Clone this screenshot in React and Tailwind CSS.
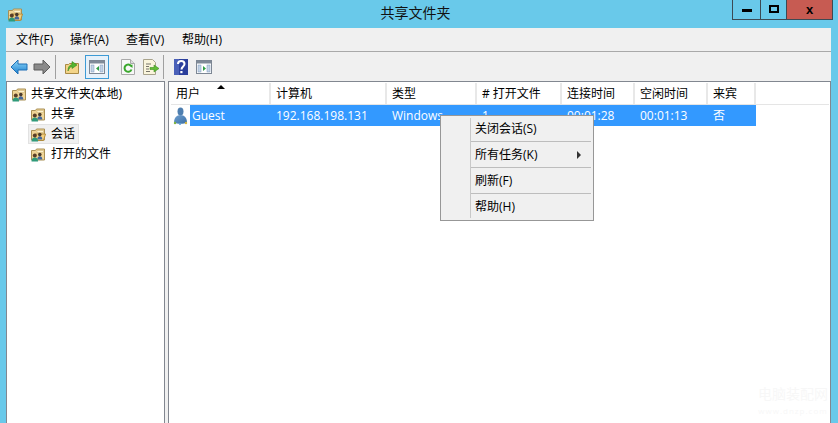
import React from 'react';

const FolderIcon = ({ open = false }) => (
  <svg width="16" height="16" viewBox="0 0 16 16" className="shrink-0">
    <path d="M1.500 4.500h4l1-1.500h8v11h-13z" fill="#f0d596" stroke="#a88f55" />
    <path d="M7 4.500h6.500v2H7z" fill="#fdf3cf" stroke="#c9ae70" strokeWidth=".5" />
    {open && <path d="M5 8h10.500l-2 6.500H5z" fill="#f5cf7c" stroke="#b08c3e" />}
    <circle cx="9.800" cy="8.600" r="1.800" fill="#4a3a2c" />
    <path d="M7.300 13.500c0-2.200 1-3.200 2.500-3.200s2.500 1 2.500 3.200z" fill="#46689a" />
    <circle cx="4.800" cy="9.600" r="2" fill="#5a3f28" />
    <path d="M1.500 15.500c0-2.600 1.300-3.900 3.300-3.900s3.300 1.300 3.300 3.900z" fill="#2f9a7a" />
  </svg>
);

const ArrowLeft = () => (
  <svg width="18" height="16" viewBox="0 0 18 16">
    <defs>
      <linearGradient id="blueArrow" x1="0" y1="0" x2="0" y2="1">
        <stop offset="0" stopColor="#8fd8f8" />
        <stop offset="1" stopColor="#1b7fd0" />
      </linearGradient>
    </defs>
    <path d="M1 8l7-7v4h9v6H8v4z" fill="url(#blueArrow)" stroke="#1e6fb5" />
  </svg>
);

const ArrowRight = () => (
  <svg width="18" height="16" viewBox="0 0 18 16">
    <path d="M17 8l-7-7v4H1v6h9v4z" fill="#8a8a8a" stroke="#5c5c5c" />
  </svg>
);

const UpFolder = () => (
  <svg width="16" height="16" viewBox="0 0 16 16">
    <path d="M1.500 5.500h3l1-1h9v10h-13z" fill="#f3d488" stroke="#a98a45" />
    <path d="M4 12c0-4 1.500-6 4-6.500V2.500L13 6l-5 3.500V7.500C6 8 5 9.500 4 12z" fill="#55b52f" stroke="#2f8a1c" strokeWidth=".6" />
  </svg>
);

const WindowPane = ({ arrowRight = false }) => (
  <svg width="16" height="16" viewBox="0 0 16 16">
    <rect x=".5" y="1.500" width="15" height="13" fill="#fff" stroke="#7d8794" />
    <rect x="1" y="2" width="14" height="2.500" fill="#7f8a98" />
    <rect x="2" y="6" width="3" height="7" fill="#c3d3e6" stroke="#7c98ba" strokeWidth=".5" />
    <rect x="11" y="6" width="3" height="7" fill="#c3d3e6" stroke="#7c98ba" strokeWidth=".5" />
    <path d={arrowRight ? 'M7 7l3 2.500L7 12z' : 'M10 7L7 9.500l3 2.500z'} fill="#2f9e44" />
  </svg>
);

const RefreshIcon = () => (
  <svg width="14" height="16" viewBox="0 0 14 16">
    <path d="M.5.500h9l4 4v11H.5z" fill="#f7f7f7" stroke="#a9a9a9" />
    <path d="M9.500.500v4h4" fill="#ddd" stroke="#a9a9a9" />
    <path d="M10 7a3.600 3.600 0 1 0 .5 3.500" fill="none" stroke="#3aa72c" strokeWidth="2" />
    <path d="M8 6.500l3.500-1v3.500z" fill="#3aa72c" />
  </svg>
);

const ExportIcon = () => (
  <svg width="17" height="16" viewBox="0 0 17 16">
    <path d="M.5.500h9l3 3v12H.5z" fill="#faf5dc" stroke="#a8a38c" />
    <path d="M3 5h5M3 7.500h3M3 10h3M3 12.500h4" stroke="#77746a" />
    <path d="M7 8.500h4V6l5 3.500-5 3.500v-2.500H7z" fill="#62bd35" stroke="#3d8f1f" strokeWidth=".6" />
  </svg>
);

const HelpIcon = () => (
  <svg width="14" height="16" viewBox="0 0 14 16">
    <rect width="14" height="16" fill="#2b3f9c" />
    <rect x="0" y="0" width="5" height="16" fill="#4a60b8" />
    <path d="M4 5c0-4 6.500-4 6.500 0 0 2.500-3 2.500-3 5.500" fill="none" stroke="#fff" strokeWidth="2" />
    <rect x="6.300" y="12" width="2.200" height="2.200" fill="#fff" />
  </svg>
);

const UserIcon = () => (
  <svg width="15" height="18" viewBox="0 0 15 18" className="shrink-0">
    <defs>
      <linearGradient id="userBody" x1="0" y1="0" x2="1" y2="1">
        <stop offset="0" stopColor="#6f9fd0" />
        <stop offset="1" stopColor="#3a6ea5" />
      </linearGradient>
    </defs>
    <ellipse cx="7.500" cy="4.500" rx="3" ry="4" fill="#4f7fb0" />
    <path d="M1 15.500c0-4.500 2.500-7.500 6.500-7.500s6.500 3 6.500 7.500c-3 1.800-10 1.800-13 0z" fill="url(#userBody)" />
    <circle cx="2" cy="16" r="1.200" fill="#7cb342" />
    <circle cx="7" cy="17" r="1" fill="#5aa0d8" />
    <circle cx="13" cy="16" r="1.200" fill="#d6b640" />
  </svg>
);

const Sep = () => <div className="w-px h-6 bg-[#a0a0a0] mx-[3px]" />;

const columns = [
  { label: '用户', w: 'w-[100px]', sort: true },
  { label: '计算机', w: 'w-[116px]' },
  { label: '类型', w: 'w-[90px]' },
  { label: '# 打开文件', w: 'w-[85px]' },
  { label: '连接时间', w: 'w-[73px]' },
  { label: '空闲时间', w: 'w-[73px]' },
  { label: '来宾', w: 'w-[48px]' },
];

const cells = [
  { text: '192.168.198.131', w: 'w-[116px]' },
  { text: 'Windows', w: 'w-[90px]' },
  { text: '1', w: 'w-[85px]' },
  { text: '00:01:28', w: 'w-[73px]' },
  { text: '00:01:13', w: 'w-[73px]' },
  { text: '否', w: 'w-[48px]' },
];

const treeItems = [
  { label: '共享' },
  { label: '会话', open: true, active: true },
  { label: '打开的文件' },
];

const menuGroups = [
  { label: '关闭会话(S)', cls: 'h-[24px] leading-[21px] border-b' },
  { label: '所有任务(K)', cls: 'h-[26px] leading-[25px] border-b', sub: true },
  { label: '刷新(F)', cls: 'h-[26px] leading-[25px] border-b' },
  { label: '帮助(H)', cls: 'h-[26px] leading-[25px]' },
];

const App = () => {
  return (
    <div className="relative w-[838px] h-[423px] overflow-hidden bg-[#69c9ea] text-[12px] text-black font-['Open_Sans','Noto_Sans_CJK_SC',sans-serif] flex flex-col">
      {/* title bar */}
      <div className="relative h-[28px] shrink-0 flex items-start">
        <div className="ml-[7px] mt-[6px]">
          <FolderIcon open />
        </div>
        <div className="flex-1 text-center text-[14px] leading-[26px] text-[#111] pl-[76px]">共享文件夹</div>
        <div className="flex h-[20px] mr-[5px] border border-t-0 border-[#3c4a54]">
          <div className="w-[28px] border-r border-[#3c4a54] flex items-center justify-center">
            <div className="w-[10px] h-[3px] bg-black mt-[2px]" />
          </div>
          <div className="w-[26px] border-r border-[#3c4a54] flex items-center justify-center">
            <div className="w-[10px] h-[8px] border-2 border-black -mt-[2px]" />
          </div>
          <div className="w-[45px] bg-[#c75b52] flex items-center justify-center text-[13px] font-bold leading-none font-['Liberation_Sans',sans-serif]">x</div>
        </div>
      </div>

      {/* client area */}
      <div className="flex-1 mx-[6px] mr-[7px] flex flex-col bg-[#f0f0f0] min-h-0">
        <div className="h-[24px] shrink-0 border-b border-[#a9a9a9] flex items-center pl-[10px] leading-none pt-[1px]">
          <span className="w-[54px]">文件(F)</span>
          <span className="w-[56px]">操作(A)</span>
          <span className="w-[56px]">查看(V)</span>
          <span>帮助(H)</span>
        </div>
        <div className="h-[29px] shrink-0 flex items-center pl-[4px]">
          <ArrowLeft />
          <div className="w-[5px]" />
          <ArrowRight />
          <div className="w-[1px]" />
          <Sep />
          <div className="w-[5px]" />
          <UpFolder />
          <div className="w-[5px]" />
          <div className="w-[24px] h-[24px] border border-[#3d9bd6] bg-[#e6f1fa] flex items-center justify-center">
            <WindowPane />
          </div>
          <div className="w-[12px]" />
          <RefreshIcon />
          <div className="w-[8px]" />
          <ExportIcon />
          <Sep />
          <div className="w-[7px]" />
          <HelpIcon />
          <div className="w-[8px]" />
          <WindowPane arrowRight />
        </div>

        <div className="flex-1 flex min-h-0 gap-[3px]">
          {/* tree */}
          <div className="w-[159px] bg-white border border-b-0 border-[#828790] pt-[2px] pl-[4px] leading-[20px]">
            <div className="flex items-center gap-[4px] h-[20px]">
              <FolderIcon />
              <span>共享文件夹(本地)</span>
            </div>
            {treeItems.map((item) => (
              <div key={item.label} className="flex items-center h-[20px] pl-[17px]">
                <div className={`flex items-center h-[20px] pl-[1px] pr-[3px] border ${item.active ? 'bg-[#f0f0f0] border-[#e2e2e2]' : 'border-transparent'}`}>
                  <FolderIcon open={item.open} />
                  <span className="ml-[5px] h-[19px] leading-[18px]">{item.label}</span>
                </div>
              </div>
            ))}
          </div>

          {/* list */}
          <div className="flex-1 bg-white border border-b-0 border-[#828790] pl-[2px] min-w-0">
            <div className="flex h-[22px] mt-[1px] border-b border-[#e5e5e5] mr-[1px]">
              {columns.map((col) => (
                <div key={col.label} className={`${col.w} relative border-r-2 border-[#e8e8e8] pl-[5px] leading-[22px] shrink-0`}>
                  {col.label}
                  {col.sort && (
                    <div className="absolute left-[46px] top-[2px] w-0 h-0 border-x-[4px] border-x-transparent border-b-[4px] border-b-black" />
                  )}
                </div>
              ))}
            </div>
            <div className="flex h-[21px] items-center">
              <div className="w-[19px] flex justify-center shrink-0">
                <UserIcon />
              </div>
              <div className="flex bg-[#3399ff] text-white h-[21px] leading-[21px]">
                <div className="w-[81px] pl-[2px]">Guest</div>
                {cells.map((cell) => (
                  <div key={cell.text} className={`${cell.w} pl-[5px]`}>{cell.text}</div>
                ))}
              </div>
            </div>
          </div>
        </div>
      </div>

      {/* context menu */}
      <div className="absolute left-[440px] top-[115px] w-[154px] h-[106px] bg-[#f0f0f0] border border-[#979797] py-[2px] pl-[30px] pr-[2px]">
        <div className="absolute left-[29px] top-[2px] bottom-[2px] w-px bg-[#c8c8c8]" />
        {menuGroups.map((item) => (
          <div key={item.label} className={`relative pl-[4px] border-[#bdbdbd] ${item.cls}`}>
            {item.label}
            {item.sub && (
              <div className="absolute right-[10px] top-[9px] w-0 h-0 border-y-[4px] border-y-transparent border-l-[4px] border-l-[#333]" />
            )}
          </div>
        ))}
      </div>

      {/* watermark */}
      <div className="absolute right-[10px] bottom-[8px] w-[70px] text-center text-[#f7f7f7] leading-none">
        <div className="text-[14px]">电脑装配网</div>
        <div className="text-[8px] tracking-[1px] mt-[6px]">www.dnzp.com</div>
      </div>
    </div>
  );
};

export default App;
